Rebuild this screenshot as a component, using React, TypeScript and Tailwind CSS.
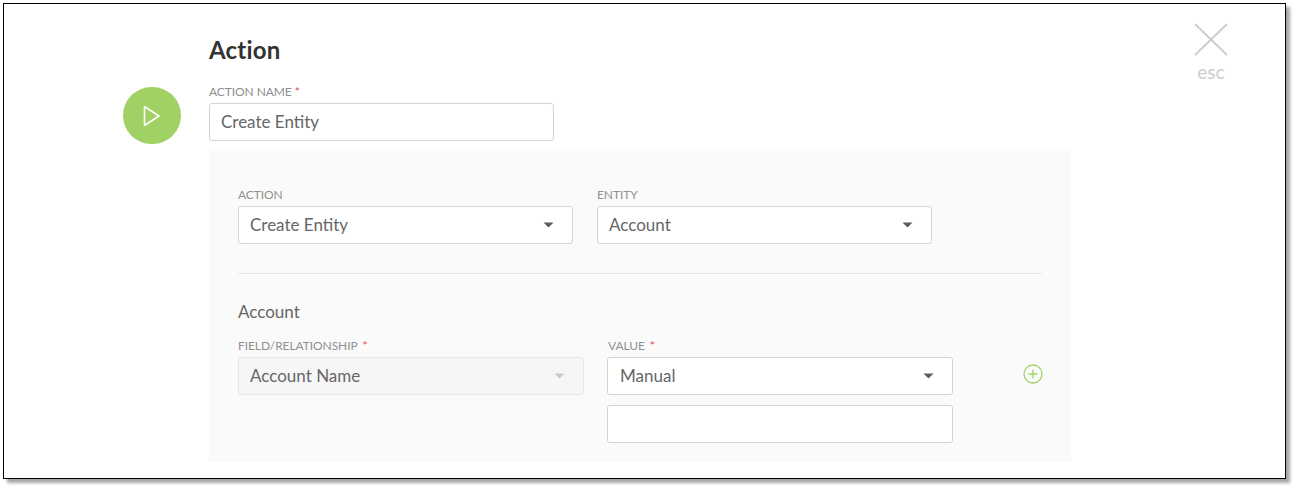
import type { ReactNode } from "react";

// ── Small form pieces ─────────────────────────

function Label({ text, required, gap }: { text: string; required?: boolean; gap?: boolean }) {
  return (
    <div className="h-[13px] text-[12px] leading-[13px] tracking-[-0.08px] text-[#909090] whitespace-nowrap">
      {text}
      {required && <span className={`text-[#e8474c] ${gap ? "ml-[5px]" : "ml-[3px]"}`}>*</span>}
    </div>
  );
}

function Caret({ muted }: { muted?: boolean }) {
  return (
    <svg width="11" height="6" viewBox="0 0 11 6" className="shrink-0">
      <path d="M0.5 0.5h10L5.5 5.5z" fill={muted ? "#c9c9c9" : "#5c5c5c"} />
    </svg>
  );
}

function Box({ children, className }: { children?: ReactNode; className: string }) {
  return (
    <div
      className={`flex h-[38px] items-center justify-between rounded-[3px] border border-[#d4d4d4] text-[17px] text-[#666666] ${className}`}
    >
      {children}
    </div>
  );
}

function Select({ value, className, disabled }: { value: string; className: string; disabled?: boolean }) {
  return (
    <Box className={`pr-[18px] ${disabled ? "bg-[#f6f6f6] border-[#e6e6e6]" : "bg-white"} ${className}`}>
      <span>{value}</span>
      <Caret muted={disabled} />
    </Box>
  );
}

// ── Page ──────────────────────────────────────

export default function App() {
  return (
    <div
      className="h-[488px] w-[1294px] overflow-hidden bg-white pl-[3px] pt-[3px]"
      style={{ fontFamily: "Lato, 'Open Sans', sans-serif" }}
    >
      <div className="flex h-[476px] w-[1283px] border border-black bg-white shadow-[4px_4px_3px_rgba(0,0,0,0.35)]">
        {/* Play badge */}
        <div className="ml-[119px] mr-[28px] mt-[83px] flex h-[57px] w-[58px] shrink-0 items-center justify-center rounded-full bg-[#a1d164]">
          <svg width="18" height="22" viewBox="0 0 18 22" fill="none">
            <path d="M1.5 1.5v19L16 11z" stroke="#ffffff" strokeWidth="1.6" strokeLinejoin="round" />
          </svg>
        </div>

        <div className="w-[862px] shrink-0">
          <h1 className="mt-[30px] h-[32px] text-[24px] font-bold leading-[32px] tracking-[0.2px] text-[#333333]">Action</h1>

          <div className="mt-[19px]">
            <Label text="ACTION NAME" required />
          </div>
          <Box className="mt-[5px] w-[345px] bg-white pl-[11px] text-[#555555]">Create Entity</Box>

          <div className="mt-[10px] h-[311px] bg-[#fafafa] px-[29px] pt-[37px]">
            <div className="flex gap-[24px]">
              <div>
                <Label text="ACTION" />
                <Select value="Create Entity" className="mt-[5px] w-[335px] pl-[11px]" />
              </div>
              <div>
                <Label text="ENTITY" />
                <Select value="Account" className="mt-[5px] w-[335px] pl-[11px]" />
              </div>
            </div>

            <div className="mt-[29px] h-px bg-[#e6e6e6]" />

            <div className="mt-[26px] h-[24px] text-[17px] leading-[24px] text-[#666666]">Account</div>

            <div className="mt-[15px] flex">
              <div className="w-[346px]">
                <Label text="FIELD/RELATIONSHIP" required gap />
                <Select value="Account Name" className="mt-[5px] w-[346px] pl-[11px]" disabled />
              </div>
              <div className="ml-[23px] w-[346px]">
                <div className="pl-[1px]">
                  <Label text="VALUE" required gap />
                </div>
                <Select value="Manual" className="mt-[5px] w-[346px] pl-[12px]" />
                <Box className="mt-[10px] w-[346px] bg-white" />
              </div>
              <svg width="20" height="20" viewBox="0 0 20 20" fill="none" className="ml-[70px] mt-[25px] shrink-0">
                <circle cx="10" cy="10" r="9" stroke="#a1d164" strokeWidth="1.3" />
                <path d="M10 5.5v9M5.5 10h9" stroke="#a1d164" strokeWidth="1.3" />
              </svg>
            </div>
          </div>
        </div>

        {/* Close */}
        <div className="ml-[123px] mt-[19px] flex w-[34px] shrink-0 flex-col items-center">
          <svg width="34" height="33" viewBox="0 0 34 33" fill="none">
            <path d="M1 1l32 31M33 1L1 32" stroke="#c9cdd0" strokeWidth="1.8" />
          </svg>
          <span className="mt-[6px] text-[19px] font-medium leading-[20px] text-[#d0d0d0]">esc</span>
        </div>
      </div>
    </div>
  );
}
